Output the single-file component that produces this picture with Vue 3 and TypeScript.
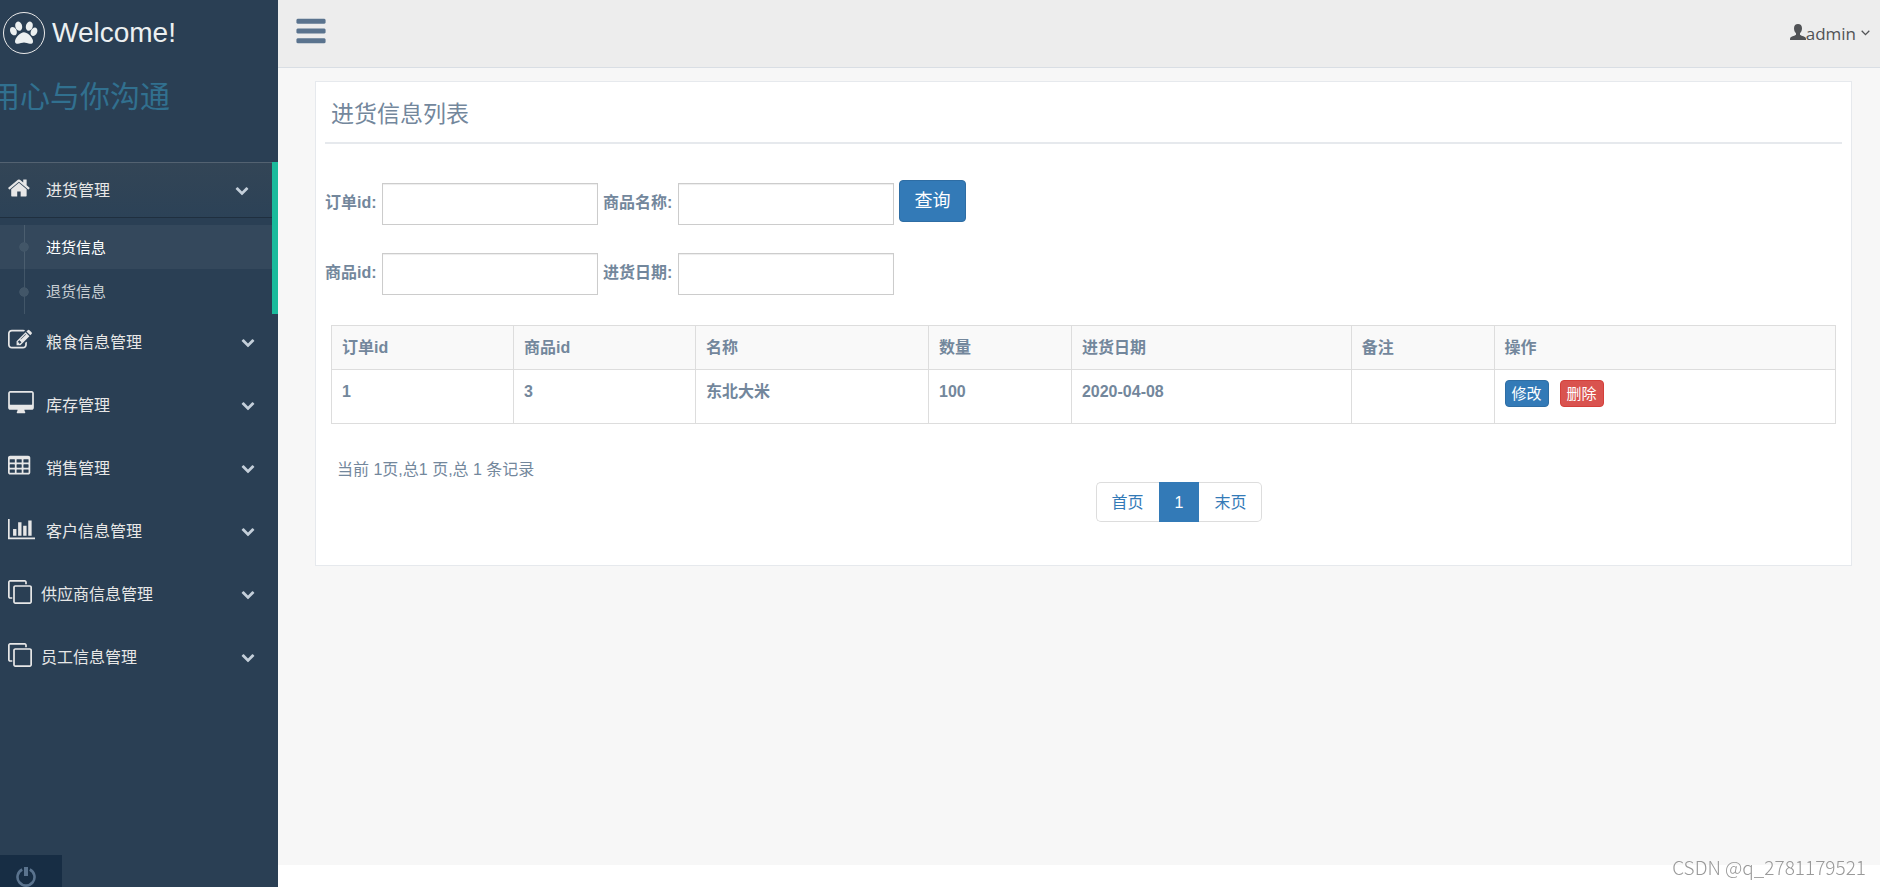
<script setup lang="ts">
import { reactive, ref } from 'vue'

interface MenuItem {
  label: string
  icon: keyof typeof icons
  compact?: boolean
  children?: string[]
}

interface Order {
  orderId: number
  goodsId: number
  name: string
  amount: number
  date: string
  remark: string
}

const icons = {
  home: {
    box: '80 0 1792 1792',
    width: 24,
    path: 'M1472 992v480q0 26-19 45t-45 19h-384v-384h-256v384h-384q-26 0-45-19t-19-45v-480q0-1 .5-3t.5-3l575-474 575 474q1 2 1 6zm223-69l-62 74q-8 9-21 11h-3q-13 0-21-7l-692-577-692 577q-12 8-24 7-13-2-21-11l-62-74q-8-10-7-23.5t11-21.5l719-599q32-26 76-26t76 26l244 204v-195q0-14 9-23t23-9h192q14 0 23 9t9 23v408l219 182q10 8 11 21.5t-7 23.5z',
  },
  edit: {
    box: '0 0 1792 1792',
    width: 24,
    path: 'M888 1184l116-116-152-152-116 116v56h96v96h56zm440-720q-16-16-33 1l-350 350q-17 17-1 33t33-1l350-350q17-17 1-33zm80 594v190q0 119-84.5 203.5t-203.5 84.5h-832q-119 0-203.5-84.5t-84.5-203.5v-832q0-119 84.5-203.5t203.5-84.5h832q63 0 117 25 15 7 18 23 3 17-9 29l-49 49q-14 14-32 8-23-6-45-6h-832q-66 0-113 47t-47 113v832q0 66 47 113t113 47h832q66 0 113-47t47-113v-126q0-13 9-22l64-64q15-15 35-7t20 29zm-96-738l288 288-672 672h-288v-288zm444 132l-92 92-288-288 92-92q28-28 68-28t68 28l152 152q28 28 28 68t-28 68z',
  },
  desktop: {
    box: '0 0 1920 1792',
    width: 26,
    path: 'M1792 992v-832q0-13-9.5-22.5t-22.5-9.5h-1600q-13 0-22.5 9.5t-9.5 22.5v832q0 13 9.5 22.5t22.5 9.5h1600q13 0 22.5-9.5t9.5-22.5zm128-832v1088q0 66-47 113t-113 47h-544q0 37 16 77.5t32 71 16 43.5q0 26-19 45t-45 19h-512q-26 0-45-19t-19-45q0-14 16-44t32-70 16-78h-544q-66 0-113-47t-47-113v-1088q0-66 47-113t113-47h1600q66 0 113 47t47 113z',
  },
  table: {
    box: '64 0 1792 1792',
    width: 24,
    path: 'M224 128h1344q66 0 113 47t47 113v1088q0 66-47 113t-113 47h-1344q-66 0-113-47t-47-113v-1088q0-66 47-113t113-47zM192 416v192q0 32 32 32h320q32 0 32-32v-192q0-32-32-32h-320q-32 0-32 32zM704 416v192q0 32 32 32h320q32 0 32-32v-192q0-32-32-32h-320q-32 0-32 32zM1216 416v192q0 32 32 32h320q32 0 32-32v-192q0-32-32-32h-320q-32 0-32 32zM192 800v192q0 32 32 32h320q32 0 32-32v-192q0-32-32-32h-320q-32 0-32 32zM704 800v192q0 32 32 32h320q32 0 32-32v-192q0-32-32-32h-320q-32 0-32 32zM1216 800v192q0 32 32 32h320q32 0 32-32v-192q0-32-32-32h-320q-32 0-32 32zM192 1184v192q0 32 32 32h320q32 0 32-32v-192q0-32-32-32h-320q-32 0-32 32zM704 1184v192q0 32 32 32h320q32 0 32-32v-192q0-32-32-32h-320q-32 0-32 32zM1216 1184v192q0 32 32 32h320q32 0 32-32v-192q0-32-32-32h-320q-32 0-32 32z',
  },
  chart: {
    box: '0 0 2048 1792',
    width: 27,
    path: 'M640 896v512h-256v-512h256zm384-512v1024h-256v-1024h256zm1024 1152v128h-2048v-1536h128v1408h1920zm-640-896v768h-256v-768h256zm384-384v1152h-256v-1152h256z',
  },
  clone: {
    box: '0 0 1792 1792',
    width: 24,
    path: 'M1664 1632v-1088q0-13-9.5-22.5t-22.5-9.5h-1088q-13 0-22.5 9.5t-9.5 22.5v1088q0 13 9.5 22.5t22.5 9.5h1088q13 0 22.5-9.5t9.5-22.5zm128-1088v1088q0 66-47 113t-113 47h-1088q-66 0-113-47t-47-113v-1088q0-66 47-113t113-47h1088q66 0 113 47t47 113zm-384-384v160h-128v-160q0-13-9.5-22.5t-22.5-9.5h-1088q-13 0-22.5 9.5t-9.5 22.5v1088q0 13 9.5 22.5t22.5 9.5h160v128h-160q-66 0-113-47t-47-113v-1088q0-66 47-113t113-47h1088q66 0 113 47t47 113z',
  },
}

const menu: MenuItem[] = [
  { label: '进货管理', icon: 'home', children: ['进货信息', '退货信息'] },
  { label: '粮食信息管理', icon: 'edit' },
  { label: '库存管理', icon: 'desktop' },
  { label: '销售管理', icon: 'table' },
  { label: '客户信息管理', icon: 'chart' },
  { label: '供应商信息管理', icon: 'clone', compact: true },
  { label: '员工信息管理', icon: 'clone', compact: true },
]

const openItem = ref('进货管理')
const currentPage = ref('进货信息')

const query = reactive({ orderId: '', goodsName: '', goodsId: '', date: '' })

const columns = ['订单id', '商品id', '名称', '数量', '进货日期', '备注', '操作']
const orders = ref<Order[]>([
  { orderId: 1, goodsId: 3, name: '东北大米', amount: 100, date: '2020-04-08', remark: '' },
])
</script>

<template>
  <div class="page">
    <aside class="sidebar">
      <a href="#" class="brand">
        <span class="brand-mark">
          <svg viewBox="0 0 1792 1792" aria-hidden="true">
            <path d="M780 508q0 60-19 113.5t-63 92.5-105 39q-76 0-138-57.5t-92-135.5-30-151q0-60 19-113.5t63-92.5 105-39q77 0 138.5 57.5t91.5 135 30 151.5zm-342 340q0 80-42 139t-119 59q-76 0-141.5-55.5t-100.5-133.5-35-152q0-80 42-139.5t119-59.5q76 0 141.5 55.5t100.5 134 35 152.5zm458 4q118 0 255 97.5t229 237 92 254.5q0 46-17 76.5t-48.5 45-64.5 20-76 5.5q-68 0-187.5-45t-182.5-45q-66 0-192.5 44.5t-200.5 44.5q-183 0-183-146 0-86 56-191.5t139.5-192.5 187.5-146 193-59zm303-99q-61 0-105-39t-63-92.5-19-113.5q0-74 30-151.5t91.5-135 138.5-57.5q61 0 105 39t63 92.5 19 113.5q0 73-30 151t-92 135.5-138 57.5zm394-207q77 0 119 59.5t42 139.5q0 74-35 152t-100.5 133.5-141.5 55.5q-77 0-119-59t-42-139q0-74 35-152.5t100.5-134 141.5-55.5z" />
          </svg>
        </span>
        <span>Welcome!</span>
      </a>
      <p class="slogan">用心与你沟通</p>

      <nav>
        <ul class="menu">
          <li v-for="item in menu" :key="item.label" :class="{ active: item.label === openItem }">
            <a href="#" class="menu-link" @click.prevent="openItem = item.label">
              <span class="menu-icon" :class="{ compact: item.compact }">
                <svg :viewBox="icons[item.icon].box" :width="icons[item.icon].width" height="24" aria-hidden="true">
                  <path fill-rule="evenodd" :d="icons[item.icon].path" />
                </svg>
              </span>
              <span class="menu-label">{{ item.label }}</span>
              <svg class="menu-arrow" viewBox="0 0 1792 1792" aria-hidden="true">
                <path d="M1683 808l-742 741q-19 19-45 19t-45-19l-742-741q-19-19-19-45.5t19-45.5l166-165q19-19 45-19t45 19l531 531 531-531q19-19 45-19t45 19l166 165q19 19 19 45.5t-19 45.5z" />
              </svg>
            </a>
            <ul v-if="item.children && item.label === openItem" class="submenu">
              <li v-for="child in item.children" :key="child" :class="{ current: child === currentPage }">
                <a href="#" @click.prevent="currentPage = child">{{ child }}</a>
              </li>
            </ul>
          </li>
        </ul>
      </nav>

      <div class="sidebar-footer">
        <button type="button" class="power" aria-label="退出">
          <svg viewBox="0 0 20 20" aria-hidden="true">
            <path class="ring" d="M6.2 2.5a8.5 8.5 0 1 0 7.6 0" />
            <path class="stem" d="M10 0v9" />
          </svg>
        </button>
      </div>
    </aside>

    <div class="content">
      <header class="topbar">
        <button type="button" class="toggle" aria-label="菜单">
          <svg viewBox="0 0 1792 1792" aria-hidden="true">
            <path d="M1664 1344v128q0 26-19 45t-45 19h-1408q-26 0-45-19t-19-45v-128q0-26 19-45t45-19h1408q26 0 45 19t19 45zm0-512v128q0 26-19 45t-45 19h-1408q-26 0-45-19t-19-45v-128q0-26 19-45t45-19h1408q26 0 45 19t19 45zm0-512v128q0 26-19 45t-45 19h-1408q-26 0-45-19t-19-45v-128q0-26 19-45t45-19h1408q26 0 45 19t19 45z" />
          </svg>
        </button>
        <a href="#" class="user">
          <svg class="user-icon" viewBox="0 0 16 16" aria-hidden="true">
            <path d="M8 0C10.500 0 12 1.600 12 4.200C12 6.500 11.200 8.200 10 9.200V10.800C10.400 11.600 14.400 12.400 15.500 13.600C16 14.200 16 15 16 16H0C0 15 0 14.200 .5 13.600C1.600 12.400 5.600 11.600 6 10.800V9.200C4.800 8.200 4 6.500 4 4.200C4 1.600 5.500 0 8 0Z" />
          </svg>
          <span>admin</span>
          <svg class="user-arrow" viewBox="0 0 9 6" aria-hidden="true">
            <path d="M.7 .8L4.500 4.600L8.300 .8" />
          </svg>
        </a>
      </header>

      <main class="main">
        <section class="panel">
          <h2>进货信息列表</h2>

          <form class="search" @submit.prevent>
            <label for="order-id">订单id:</label>
            <input id="order-id" v-model="query.orderId" type="text" />
            <label for="goods-name">商品名称:</label>
            <input id="goods-name" v-model="query.goodsName" type="text" />
            <button type="submit" class="search-button">查询</button>
            <label for="goods-id">商品id:</label>
            <input id="goods-id" v-model="query.goodsId" type="text" />
            <label for="order-date">进货日期:</label>
            <input id="order-date" v-model="query.date" type="text" />
          </form>

          <table>
            <colgroup>
              <col class="col-id" />
              <col class="col-id" />
              <col class="col-name" />
              <col class="col-amount" />
              <col class="col-date" />
              <col class="col-amount" />
              <col />
            </colgroup>
            <thead>
              <tr>
                <th v-for="column in columns" :key="column" scope="col">{{ column }}</th>
              </tr>
            </thead>
            <tbody>
              <tr v-for="order in orders" :key="order.orderId">
                <td>{{ order.orderId }}</td>
                <td>{{ order.goodsId }}</td>
                <td>{{ order.name }}</td>
                <td>{{ order.amount }}</td>
                <td>{{ order.date }}</td>
                <td>{{ order.remark }}</td>
                <td>
                  <div class="actions">
                    <button type="button" class="small-button">修改</button>
                    <button type="button" class="small-button danger">删除</button>
                  </div>
                </td>
              </tr>
            </tbody>
          </table>

          <p class="summary">当前 1页,总1 页,总 1 条记录</p>
          <nav class="pager" aria-label="分页">
            <a href="#">首页</a>
            <a href="#" class="selected" aria-current="page">1</a>
            <a href="#">末页</a>
          </nav>
        </section>
      </main>
    </div>

    <span class="watermark">CSDN @q_2781179521</span>
  </div>
</template>

<style>
body {
  margin: 0;
  background: #fff;
}
</style>

<style scoped>
* {
  box-sizing: border-box;
}

.page {
  display: flex;
  min-height: 100vh;
  color: #73879c;
  font-family: "Liberation Sans", "Noto Sans CJK SC", sans-serif;
  font-size: 16px;
  line-height: 24px;
}

a {
  text-decoration: none;
}

button,
input {
  font: inherit;
}

button {
  cursor: pointer;
}

ul {
  margin: 0;
  padding: 0;
  list-style: none;
}

svg {
  display: block;
  fill: currentColor;
}

.sidebar {
  display: flex;
  flex: none;
  flex-direction: column;
  width: 278px;
  overflow: hidden;
  background: #2a3f54;
}

.brand {
  display: flex;
  align-items: center;
  gap: 7px;
  height: 66px;
  padding-left: 3px;
  color: #ecf0f1;
  font-size: 28px;
}

.brand-mark {
  display: grid;
  place-items: center;
  width: 42px;
  height: 42px;
  border: 1px solid #eaeaea;
  border-radius: 50%;
}

.brand-mark svg {
  width: 28px;
  height: 28px;
}

.slogan {
  height: 96px;
  margin: 0 0 0 -10px;
  color: #31708f;
  font-size: 30px;
  line-height: 62px;
}

.menu-link {
  display: flex;
  align-items: center;
  height: 55px;
  margin-bottom: 8px;
  padding: 0 23px 0 8px;
  color: #e7e7e7;
}

.menu-icon {
  width: 38px;
  padding-bottom: 4px;
}

.menu-icon.compact {
  width: 33px;
}

.menu-label {
  flex: 1;
  padding-top: 2px;
}

.menu-arrow {
  width: 14px;
  height: 14px;
  color: #c4cfda;
}

.active {
  border-right: 6px solid #1abb9c;
}

.active .menu-link {
  background: linear-gradient(#334556, #2c4257);
  box-shadow: rgba(0, 0, 0, 0.25) 0 1px 0, inset rgba(255, 255, 255, 0.16) 0 1px 0;
}

.submenu {
  background: linear-gradient(#425668, #425668) 24px 0 / 1px 100% no-repeat;
}

.submenu li {
  background: radial-gradient(circle closest-side, #425668 88%, transparent) 19px center / 10px 10px no-repeat;
}

.submenu .current {
  background-color: rgba(255, 255, 255, 0.05);
}

.submenu a {
  display: block;
  height: 45px;
  padding-left: 46px;
  color: rgba(255, 255, 255, 0.75);
  font-size: 15px;
  line-height: 45px;
}

.submenu .current a {
  height: 44px;
  color: #fff;
}

.sidebar-footer {
  height: 32px;
  margin-top: auto;
  overflow: hidden;
}

.power {
  width: 62px;
  height: 44px;
  padding: 0 0 0 16px;
  border: 0;
  background: #172d44;
  color: #5a738e;
}

.power svg {
  width: 20px;
  height: 20px;
  fill: none;
  stroke: currentColor;
}

.ring {
  stroke-width: 2.6;
}

.stem {
  stroke-width: 4;
}

.content {
  flex: 1;
  min-width: 0;
  margin-bottom: 22px;
  background: #f7f7f7;
}

.topbar {
  display: flex;
  align-items: flex-start;
  justify-content: space-between;
  height: 68px;
  padding: 14px 10px 0 16px;
  border-bottom: 1px solid #d9dee4;
  background: #ededed;
}

.toggle {
  padding: 0;
  border: 0;
  background: none;
  color: #5a738e;
}

.toggle svg {
  width: 34px;
  height: 34px;
}

.user {
  display: flex;
  align-items: center;
  padding-top: 8px;
  color: #515356;
  font-family: "Open Sans", sans-serif;
  font-size: 17px;
}

.user-icon {
  width: 16px;
  height: 16px;
  margin-bottom: 4px;
}

.user-arrow {
  width: 9px;
  height: 6px;
  margin-bottom: 2px;
  margin-left: 5px;
  fill: none;
  stroke: currentColor;
  stroke-width: 1.3;
}

.main {
  padding: 13px 28px 0 37px;
}

.panel {
  padding: 9px 9px 43px;
  border: 1px solid #e6e9ed;
  background: #fff;
}

h2 {
  margin: 0;
  padding: 0 6px 4px;
  border-bottom: 2px solid #e6e9ed;
  font-size: 23px;
  font-weight: 400;
  line-height: 47px;
}

.search {
  display: grid;
  grid-template-columns: 57px 221px 75px 221px auto;
  grid-template-rows: 45px 43px;
  row-gap: 27px;
  align-items: end;
  justify-content: start;
  margin-top: 36px;
}

.search label {
  font-weight: 700;
  line-height: 44px;
}

.search input {
  width: 216px;
  height: 42px;
  padding: 6px 12px;
  border: 1px solid #ccc;
  box-shadow: inset 0 1px 1px rgba(0, 0, 0, 0.075);
  color: #555;
}

.search-button {
  align-self: start;
  width: 67px;
  height: 42px;
  padding: 0;
  border: 1px solid #2e6da4;
  border-radius: 4px;
  background: #337ab7;
  color: #fff;
  font-size: 18px;
}

table {
  width: calc(100% - 12px);
  margin: 30px 6px 34px;
  border-collapse: collapse;
  table-layout: fixed;
}

.col-id {
  width: 12.1%;
}

.col-name {
  width: 15.5%;
}

.col-amount {
  width: 9.5%;
}

.col-date {
  width: 18.6%;
}

th,
td {
  padding: 10px 10px 9px;
  border: 1px solid #ddd;
  font-weight: 700;
  text-align: left;
  vertical-align: top;
}

th {
  background: #f9f9f9;
}

td {
  height: 54px;
}

.actions {
  display: flex;
  gap: 11px;
}

.small-button {
  width: 44px;
  height: 27px;
  padding: 0;
  border: 1px solid #2e6da4;
  border-radius: 4px;
  background: #337ab7;
  color: #fff;
  font-size: 15px;
  font-weight: 400;
  line-height: 24px;
}

.danger {
  border-color: #d43f3a;
  background: #d9534f;
}

.summary {
  margin: 0 12px;
}

.pager {
  display: flex;
  margin-left: calc(50% + 12px);
}

.pager a {
  height: 40px;
  padding: 0 15px;
  border: 1px solid #ddd;
  color: #337ab7;
  line-height: 39px;
}

.pager a:first-child {
  border-right: 0;
  border-radius: 5px 0 0 5px;
}

.pager a:last-child {
  border-left: 0;
  border-radius: 0 5px 5px 0;
}

.pager .selected {
  border-color: #337ab7;
  background: #337ab7;
  color: #fff;
}

.watermark {
  position: fixed;
  right: 14px;
  bottom: 8px;
  color: #999;
  font-family: "Noto Sans CJK SC", sans-serif;
  font-size: 19px;
  font-weight: 300;
  line-height: 24px;
}
</style>
